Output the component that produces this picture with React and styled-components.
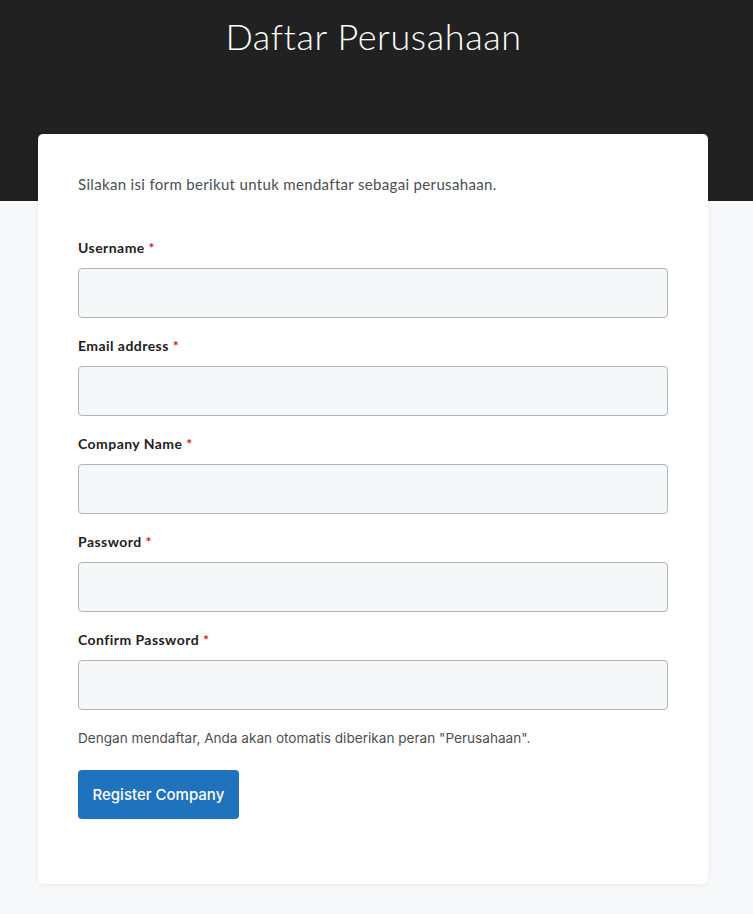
import React, { useState } from 'react';
import styled, { createGlobalStyle } from 'styled-components';

const GlobalStyle = createGlobalStyle`
  html, body {
    margin: 0;
    padding: 0;
    background: #f7f8fa;
  }
  * {
    box-sizing: border-box;
  }
`;

const Page = styled.div`
  min-height: 914px;
  background: linear-gradient(to bottom, #212121 0, #212121 201px, #f7f8fa 201px);
  padding-top: 13px;
  font-family: Lato, "Noto Sans", sans-serif;
`;

const Title = styled.h1`
  margin: 0 6px 0 0;
  height: 121px;
  text-align: center;
  color: #ffffff;
  font-family: Lato, "Open Sans", sans-serif;
  font-weight: 300;
  font-size: 36px;
  line-height: 46px;
  letter-spacing: 0.6px;
`;

const Card = styled.div`
  margin: 0 45px 0 38px;
  background: #ffffff;
  border-radius: 5px;
  box-shadow: 0 1px 6px rgba(0, 0, 0, 0.06);
  padding: 40px 40px 65px;
`;

const Intro = styled.p`
  margin: 0 0 45px;
  color: #4a4d55;
  font-size: 15px;
  line-height: 20px;
  letter-spacing: 0.33px;
`;

const Field = styled.div`
  margin-bottom: 19px;
`;

const Label = styled.label`
  display: block;
  margin-bottom: 11px;
  color: #1f2024;
  font-weight: 700;
  font-size: 14px;
  line-height: 18px;
  letter-spacing: 0.45px;
`;

const Required = styled.span`
  color: #d0212b;
`;

const Input = styled.input`
  display: block;
  width: 100%;
  height: 50px;
  padding: 0 14px;
  background: #f6f7f9;
  border: 1px solid #b1b3b8;
  border-radius: 4px;
  font-family: Inter, sans-serif;
  font-size: 15px;
  outline: none;
  &:focus {
    border-color: #1f72be;
  }
`;

const Note = styled.p`
  margin: 0 0 23px;
  color: #4b4d52;
  font-family: Inter, "Noto Sans", sans-serif;
  font-size: 13.6px;
  line-height: 18px;
`;

const Button = styled.button`
  height: 49px;
  padding: 0 14.5px;
  background: #1f72be;
  color: #ffffff;
  border: none;
  border-radius: 4px;
  font-family: Inter, sans-serif;
  font-weight: 500;
  font-size: 15px;
  cursor: pointer;
  &:hover {
    background: #1a62a4;
  }
`;

const fields = [
  { name: 'username', label: 'Username', type: 'text' },
  { name: 'email', label: 'Email address', type: 'email' },
  { name: 'company', label: 'Company Name', type: 'text' },
  { name: 'password', label: 'Password', type: 'password' },
  { name: 'confirm', label: 'Confirm Password', type: 'password' },
];

const App = () => {
  const [values, setValues] = useState({});

  const handleChange = (e) => {
    setValues({ ...values, [e.target.name]: e.target.value });
  };

  return (
    <>
      <GlobalStyle />
      <Page>
        <Title>Daftar Perusahaan</Title>
        <Card>
          <Intro>Silakan isi form berikut untuk mendaftar sebagai perusahaan.</Intro>
          <form onSubmit={(e) => e.preventDefault()}>
            {fields.map((f) => (
              <Field key={f.name}>
                <Label htmlFor={f.name}>
                  {f.label} <Required>*</Required>
                </Label>
                <Input
                  id={f.name}
                  name={f.name}
                  type={f.type}
                  value={values[f.name] || ''}
                  onChange={handleChange}
                />
              </Field>
            ))}
            <Note>Dengan mendaftar, Anda akan otomatis diberikan peran "Perusahaan".</Note>
            <Button type="submit">Register Company</Button>
          </form>
        </Card>
      </Page>
    </>
  );
};

export default App;
